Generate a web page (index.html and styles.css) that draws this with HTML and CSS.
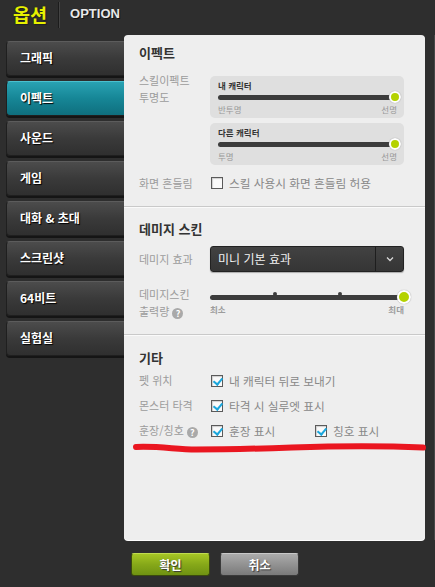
FILE: index.html
```html
<!DOCTYPE html>
<html lang="ko">
<head>
<meta charset="utf-8">
<title>옵션</title>
<link rel="stylesheet" href="styles.css">
</head>
<body>
<div class="app">
  <header class="top">
    <span class="title-ko">옵션</span>
    <span class="sep"></span>
    <span class="title-en">OPTION</span>
  </header>
  <div class="main">
    <nav class="nav">
      <div class="tab">그래픽</div>
      <div class="tab active">이펙트</div>
      <div class="tab">사운드</div>
      <div class="tab">게임</div>
      <div class="tab">대화 &amp; 초대</div>
      <div class="tab">스크린샷</div>
      <div class="tab">64비트</div>
      <div class="tab">실험실</div>
    </nav>
    <div class="panel">
      <section class="sec sec1">
        <h2 class="h">이펙트</h2>
        <div class="row-skill">
          <div class="lbl lbl-2">스킬이펙트<br>투명도</div>
          <div class="boxes">
            <div class="sbox">
              <div class="sbox-t">내 캐릭터</div>
              <div class="strack-wrap"><div class="strack"></div><span class="knob small"></span></div>
              <div class="sbox-s"><span>반투명</span><span>선명</span></div>
            </div>
            <div class="sbox">
              <div class="sbox-t">다른 캐릭터</div>
              <div class="strack-wrap"><div class="strack"></div><span class="knob small"></span></div>
              <div class="sbox-s"><span>투명</span><span>선명</span></div>
            </div>
          </div>
        </div>
        <div class="row shake">
          <div class="lbl">화면 흔들림</div>
          <label class="chk"><span class="cb"></span>스킬 사용시 화면 흔들림 허용</label>
        </div>
      </section>
      <section class="sec sec2">
        <h2 class="h">데미지 스킨</h2>
        <div class="row dd-row">
          <div class="lbl">데미지 효과</div>
          <div class="dd">
            <span class="dd-text">미니 기본 효과</span>
            <span class="dd-btn"><svg width="8" height="6" viewBox="0 0 8 6"><path d="M1 1.5 L4 4.5 L7 1.5" fill="none" stroke="#d8d8d8" stroke-width="1.3"/></svg></span>
          </div>
        </div>
        <div class="row-out">
          <div class="lbl lbl-2">데미지스킨<br>출력량 <span class="q">?</span></div>
          <div class="dslider">
            <div class="dtrack-wrap">
              <div class="dtrack"></div>
              <span class="tick t1"></span><span class="tick t2"></span>
              <span class="knob big"></span>
            </div>
            <div class="dscale"><span>최소</span><span>최대</span></div>
          </div>
        </div>
      </section>
      <section class="sec sec3">
        <h2 class="h">기타</h2>
        <div class="row r3">
          <div class="lbl">펫 위치</div>
          <label class="chk"><span class="cb on"></span>내 캐릭터 뒤로 보내기</label>
        </div>
        <div class="row r3">
          <div class="lbl">몬스터 타격</div>
          <label class="chk"><span class="cb on"></span>타격 시 실루엣 표시</label>
        </div>
        <div class="row r3">
          <div class="lbl">훈장/칭호 <span class="q">?</span></div>
          <label class="chk w1"><span class="cb on"></span>훈장 표시</label>
          <label class="chk"><span class="cb on"></span>칭호 표시</label>
        </div>
      </section>
    </div>
    <div class="edge"></div>
  </div>
  <div class="foot">
    <button class="btn ok">확인</button>
    <button class="btn cancel">취소</button>
  </div>
</div>
<svg class="marker" width="435" height="587" viewBox="0 0 435 587">
  <path d="M136 447 C160 446 176 449.5 196 449.5 S 250 449 292 447.5 S 380 445.5 423 447.5" fill="none" stroke="#ea1620" stroke-width="6" stroke-linecap="round"/>
</svg>
</body>
</html>
```

FILE: styles.css
```css
* { box-sizing: border-box; }
html, body { margin: 0; padding: 0; }
body {
  width: 435px;
  height: 587px;
  background: #2e2e2e;
  font-family: "Noto Sans CJK KR", "Noto Sans", sans-serif;
  overflow: hidden;
  position: relative;
}
.app { display: flex; flex-direction: column; }

.top {
  height: 35px;
  display: flex;
  align-items: flex-start;
}
.title-ko {
  margin: 2px 0 0 13px;
  font-size: 18.5px;
  line-height: 24px;
  font-weight: 700;
  color: #e6f000;
  text-shadow: 0 0 2px #222, 1px 1px 0 #222;
}
.sep {
  width: 1px;
  height: 26px;
  margin: 2px 0 0 11px;
  background: #1c1c1c;
  box-shadow: 1px 0 0 #444;
}
.title-en {
  margin: 6px 0 0 11px;
  font-family: "Liberation Sans", Arial, sans-serif;
  font-size: 13px;
  line-height: 16px;
  font-weight: 700;
  color: #e8e8e8;
  text-shadow: 1px 1px 0 #111;
}

.main { display: flex; height: 505px; }
.nav {
  width: 118px;
  margin-left: 6px;
  padding-top: 6px;
  display: flex;
  flex-direction: column;
  gap: 5px;
}
.tab {
  height: 35px;
  border-radius: 4px 0 0 4px;
  border: 1px solid #1f1f1f;
  border-top-color: #5c5c5c;
  border-right: none;
  background: linear-gradient(#4c4c4c, #3a3a3a 50%, #2f2f2f);
  box-shadow: 0 2px 0 #151515;
  color: #fff;
  font-size: 12px;
  font-weight: 700;
  line-height: 32px;
  padding-left: 13px;
  text-shadow: 1px 1px 1px #000;
}
.tab.active {
  background: linear-gradient(#29a2b3, #168696 50%, #0f6f7e);
  border-top-color: #4bc0cf;
}

.panel {
  width: 301px;
  height: 505px;
  background: #eeeeee;
  border-radius: 4px;
  box-shadow: 0 1px 0 #fdfdfd;
}
.edge {
  width: 10px;
  border-right: 1px solid #474747;
}

.sec { padding: 0 21px 0 15px; border-bottom: 1px solid #c9c9c9; box-shadow: 0 1px 0 #fafafa; }
.sec3 { border-bottom: none; box-shadow: none; }
.h {
  margin: 0;
  font-size: 13px;
  line-height: 18px;
  font-weight: 700;
  color: #333;
}
.sec1 { padding-top: 9px; padding-bottom: 14px; }
.sec2 { padding-top: 13px; padding-bottom: 14px; }
.sec3 { padding-top: 14px; }

.lbl {
  width: 71px;
  flex: 0 0 71px;
  font-size: 11px;
  line-height: 17px;
  color: #9c9c9c;
  white-space: nowrap;
}
.row { display: flex; align-items: center; }

.row-skill { display: flex; align-items: flex-start; margin-top: 14px; }
.row-skill .lbl { margin-top: -4px; }
.boxes { flex: 1; display: flex; flex-direction: column; gap: 5px; }
.sbox {
  height: 42px;
  background: #dfdfdf;
  border-radius: 5px;
  padding: 3px 7px 3px 8px;
}
.sbox-t {
  font-size: 8.5px;
  line-height: 12px;
  font-weight: 700;
  color: #333;
}
.strack-wrap { height: 12px; display: flex; align-items: center; position: relative; }
.strack {
  flex: 1;
  height: 5px;
  border-radius: 3px;
  background: #3c3c3c;
  margin-right: 2px;
}
.knob {
  border-radius: 50%;
  background: #b4d200;
  border: 2px solid #fff;
  box-shadow: 0 0 1px #888;
}
.knob.small { width: 12px; height: 12px; position: absolute; right: -4px; top: 0; }
.sbox-s {
  display: flex;
  justify-content: space-between;
  font-size: 8.5px;
  line-height: 12px;
  color: #999;
}

.shake { margin-top: 9px; height: 18px; }
.chk {
  display: flex;
  align-items: center;
  font-size: 11.7px;
  line-height: 18px;
  color: #888;
  white-space: nowrap;
}
.cb {
  width: 12px;
  height: 12px;
  border: 1px solid #5a5a5a;
  background: #fafafa;
  box-shadow: inset 1px 1px 1px #cfcfcf;
  margin: 0 6px 0 1px;
  position: relative;
  flex: 0 0 12px;
}
.cb.on::after {
  content: "";
  position: absolute;
  left: 3px;
  top: 0px;
  width: 4px;
  height: 7px;
  border: solid #1aa6dc;
  border-width: 0 2px 2px 0;
  transform: rotate(40deg);
}
.w1 { width: 104px; }

.dd-row { margin-top: 8px; }
.dd {
  flex: 1;
  height: 26px;
  display: flex;
  border-radius: 3px;
  border: 1px solid #222;
  background: linear-gradient(#424242, #353535);
  box-shadow: 0 1px 1px #aaa;
}
.dd-text {
  flex: 1;
  color: #f2f2f2;
  font-size: 12px;
  line-height: 24px;
  padding-left: 7px;
}
.dd-btn {
  width: 28px;
  border-left: 1px solid #1e1e1e;
  display: flex;
  align-items: center;
  justify-content: center;
}

.row-out { display: flex; align-items: flex-start; margin-top: 14px; }
.q {
  display: inline-block;
  width: 11px;
  height: 11px;
  border-radius: 50%;
  background: #a9a9a9;
  color: #fff;
  font-size: 9px;
  line-height: 11px;
  text-align: center;
  font-weight: 700;
  vertical-align: -1px;
}
.dslider { flex: 1; padding-top: 5px; }
.dtrack-wrap { position: relative; height: 12px; display: flex; align-items: center; }
.dtrack { flex: 1; height: 5px; border-radius: 3px; background: #3c3c3c; }
.tick {
  position: absolute;
  top: 1px;
  width: 4px;
  height: 4px;
  border-radius: 50%;
  background: #3c3c3c;
}
.t1 { left: 63px; }
.t2 { left: 128px; }
.knob.big { width: 14px; height: 14px; position: absolute; right: -7px; top: -1px; }
.dscale {
  display: flex;
  justify-content: space-between;
  font-size: 8.5px;
  line-height: 12px;
  font-weight: 700;
  color: #9c9c9c;
}

.r3 { height: 25px; }
.sec3 .h + .r3 { margin-top: 1px; }

.foot {
  display: flex;
  gap: 10px;
  padding: 13px 0 0 131px;
}
.btn {
  width: 79px;
  height: 23px;
  border-radius: 3px;
  font-family: "Noto Sans CJK KR", sans-serif;
  font-size: 12px;
  font-weight: 700;
  line-height: 19px;
  color: #fff;
  text-shadow: 1px 1px 1px #333;
  padding: 0;
}
.ok {
  background: linear-gradient(#a6c624, #86a819 50%, #6f9212);
  border: 1px solid #3b4a0e;
  border-top-color: #c0dc50;
}
.cancel {
  background: linear-gradient(#ababab, #929292 50%, #7a7a7a);
  border: 1px solid #3a3a3a;
  border-top-color: #c8c8c8;
}

.marker {
  position: absolute;
  left: 0;
  top: 0;
  pointer-events: none;
}
```
